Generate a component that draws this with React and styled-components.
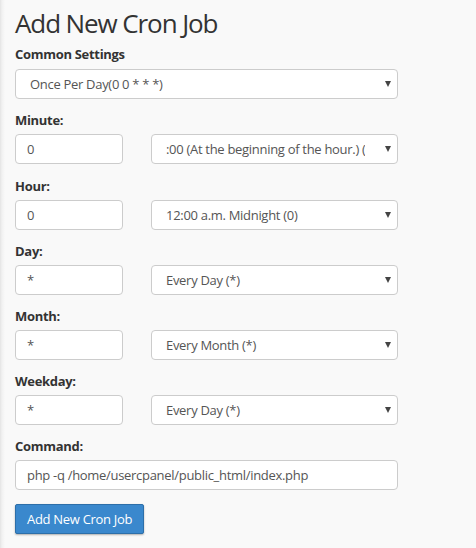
import React from "react";
import styled, { createGlobalStyle } from "styled-components";

const GlobalStyle = createGlobalStyle`
  html, body {
    margin: 0;
    padding: 0;
    background: #f9f9f9;
  }
  body {
    font-family: "Open Sans", "Liberation Sans", sans-serif;
    color: #333;
  }
`;

const Page = styled.div`
  min-height: 548px;
  padding: 7px 15px 0 15px;
  box-sizing: border-box;
  background: linear-gradient(to right, #e4e4e4 0, #f1f1f1 2px, #f9f9f9 5px);
`;

const Title = styled.h1`
  font: 400 26px/33px "Open Sans", sans-serif;
  letter-spacing: -1.1px;
  color: #333;
  margin: 0 0 4px 0;
`;

const Form = styled.form`
  width: 383px;
`;

const Group = styled.div`
  margin-bottom: ${({ gap }) => gap ?? 11}px;
`;

const Label = styled.label`
  display: block;
  font: 700 13px/20px "Open Sans", sans-serif;
  letter-spacing: -0.3px;
  color: #333;
  margin-bottom: ${({ tight }) => (tight ? 5 : 4)}px;
`;

const Pair = styled.div`
  display: grid;
  grid-template-columns: 108px 1fr;
  column-gap: 28px;
`;

const Input = styled.input`
  display: block;
  width: 100%;
  height: 30px;
  box-sizing: border-box;
  padding: 0 11px;
  border: 1px solid #ccc;
  border-radius: 4px;
  background: #fff;
  font: 400 13px "Open Sans", sans-serif;
  letter-spacing: -0.3px;
  color: #555;
  outline: none;
`;

const SelectWrap = styled.div`
  position: relative;
  &::after {
    content: "";
    position: absolute;
    right: 7px;
    top: 12px;
    border-left: 3.5px solid transparent;
    border-right: 3.5px solid transparent;
    border-top: 6px solid #444;
    pointer-events: none;
  }
`;

const Select = styled.select`
  appearance: none;
  -webkit-appearance: none;
  display: block;
  width: 100%;
  height: 30px;
  box-sizing: border-box;
  padding: 0 32px 0 14px;
  border: 1px solid #ccc;
  border-radius: 4px;
  background: #fff;
  font: 400 13px "Open Sans", sans-serif;
  letter-spacing: -0.3px;
  color: #555;
  outline: none;
`;

const Button = styled.button`
  height: 30px;
  padding: 0 11px;
  border: 1px solid #2d6fa9;
  border-radius: 2px;
  background: #3a88cd;
  color: #fff;
  font: 400 13px "Open Sans", sans-serif;
  letter-spacing: -0.3px;
  box-shadow: 0 1px 2px rgba(0, 0, 0, 0.3);
  cursor: pointer;
`;

const Dropdown = ({ value, options }) => (
  <SelectWrap>
    <Select defaultValue={value}>
      {options.map((o) => (
        <option key={o}>{o}</option>
      ))}
    </Select>
  </SelectWrap>
);

const fields = [
  { label: "Minute:", value: "0", option: ":00 (At the beginning of the hour.) (0)", gap: 12 },
  { label: "Hour:", value: "0", option: "12:00 a.m. Midnight (0)" },
  { label: "Day:", value: "*", option: "Every Day (*)" },
  { label: "Month:", value: "*", option: "Every Month (*)" },
  { label: "Weekday:", value: "*", option: "Every Day (*)" },
];

export default function App() {
  return (
    <Page>
      <GlobalStyle />
      <Title>Add New Cron Job</Title>
      <Form onSubmit={(e) => e.preventDefault()}>
        <Group>
          <Label tight>Common Settings</Label>
          <Dropdown
            value="Once Per Day(0 0 * * *)"
            options={["Once Per Day(0 0 * * *)"]}
          />
        </Group>
        {fields.map((f) => (
          <Group key={f.label} gap={f.gap}>
            <Label>{f.label}</Label>
            <Pair>
              <Input defaultValue={f.value} />
              <Dropdown value={f.option} options={[f.option]} />
            </Pair>
          </Group>
        ))}
        <Group gap={14}>
          <Label>Command:</Label>
          <Input defaultValue="php -q /home/usercpanel/public_html/index.php" />
        </Group>
        <Button type="submit">Add New Cron Job</Button>
      </Form>
    </Page>
  );
}
